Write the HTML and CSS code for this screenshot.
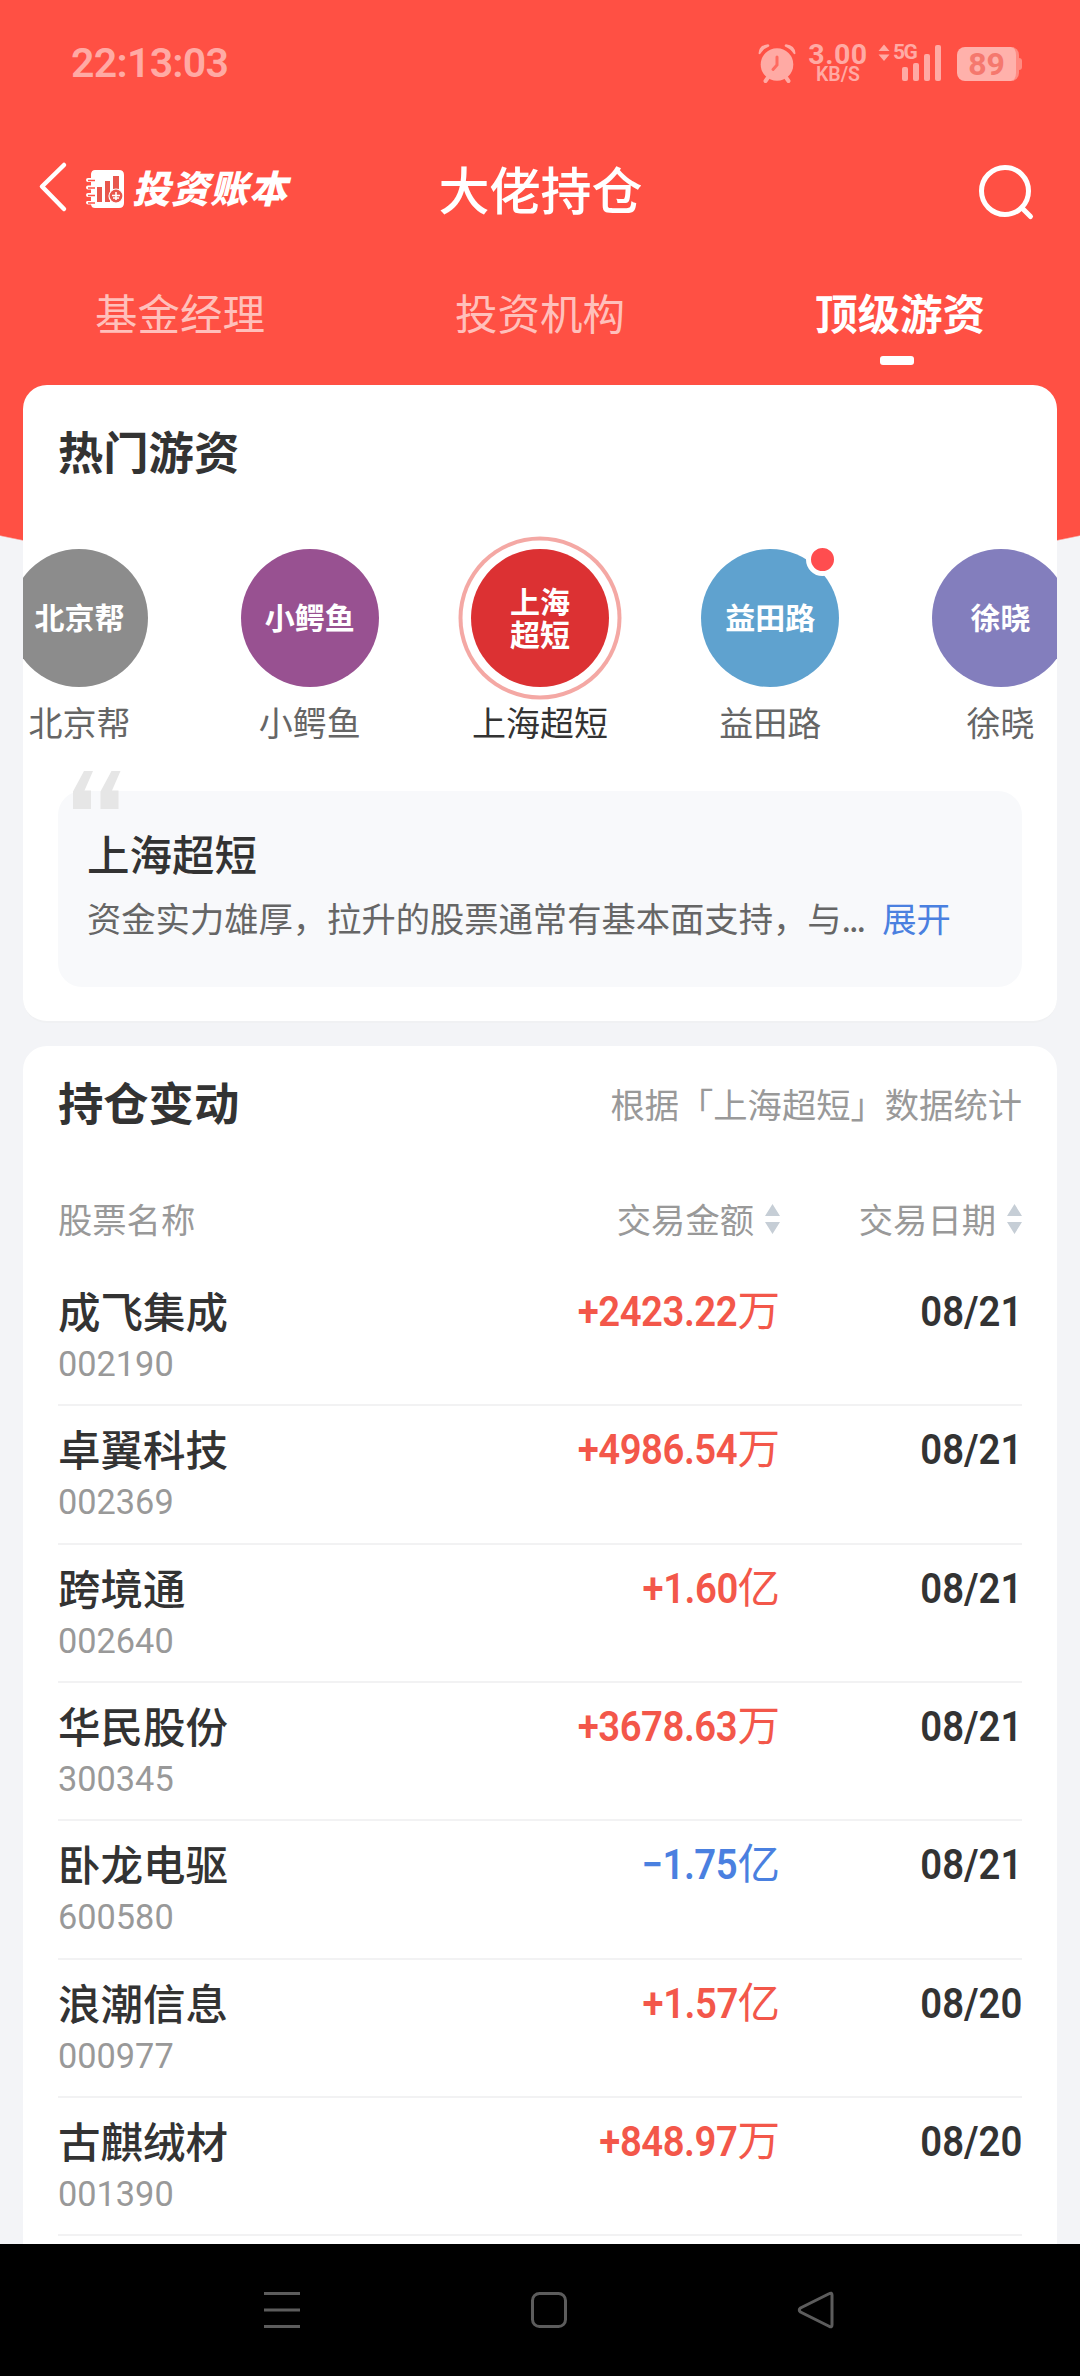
FILE: index.html
```html
<!DOCTYPE html>
<html lang="zh-CN">

<head>
    <meta charset="utf-8">
    <title>大佬持仓</title>
    <link rel="stylesheet" href="styles.css">
</head>

<body>
    <div class="screen">
        <!-- 状态栏 -->
        <div class="status">
            <span class="time">22:13:03</span>
            <svg class="alarm" width="38" height="40" viewBox="0 0 38 40">
                <circle cx="19" cy="21.500" r="16.300" />
                <path d="M0.500 10.500Q1 2 10 1.200Q12 2 11 3.500Q5 6 2.500 10.500Q1.500 12 0.500 10.500ZM37.500 10.500Q37 2 28 1.200Q26 2 27 3.500Q33 6 35.500 10.500Q36.500 12 37.500 10.500Z" />
                <path class="leg" d="M10 34.500L7.500 38M28 34.500L30.500 38" />
                <path class="hand" d="M19 14V22L15 26.500" />
            </svg>
            <div class="speed">
                <b>3.00</b>
                <span>KB/S</span>
            </div>
            <div class="signal">
                <svg class="updown" width="12" height="18" viewBox="0 0 12 18">
                    <path d="M6 0.500L11.500 7H0.500ZM6 17L0.500 10.500H11.500Z" />
                </svg>
                <span class="net">5G</span>
                <div class="bars">
                    <i class="b1"></i><i class="b2"></i><i class="b3"></i><i class="b4"></i>
                </div>
            </div>
            <div class="battery"><span>89</span></div>
            <i class="nub"></i>
        </div>

        <!-- 标题栏 -->
        <div class="navbar">
            <div class="left">
                <svg width="30" height="52" viewBox="0 0 30 52">
                    <path class="line" d="M26 4L4 25.500L26 48" />
                </svg>
                <svg class="book" width="38" height="38" viewBox="0 0 38 38">
                    <path fill="#fff" d="M9 0H33Q38 0 38 5V33Q38 38 33 38H9Q5.500 38 5 34.500H2Q0 34.500 0 32.500T2 31H5V27H2Q0 27 0 25T2 23H5V19.500H2Q0 19.500 0 17.500T2 15.500H5V12H2Q0 12 0 10T2 8H5V4Q5.500 0 9 0Z" />
                    <path fill="#e8564c" d="M11 17H16V32H11ZM19 11H24V32H19ZM27 6H33V21H27Z" />
                    <path stroke="#ff5044" stroke-width="1.400" d="M2 10.500H9M2 18H9M2 25.500H9M2 33H9" />
                    <circle cx="30" cy="26" r="7" fill="#e8564c" stroke="#fff" stroke-width="1.200" />
                    <path fill="none" stroke="#fff" stroke-width="1.600" d="M30 22V30M26 25.500H34M27 28H33" />
                </svg>
                <span class="brand">投资账本</span>
            </div>
            <h1>大佬持仓</h1>
            <div class="right">
                <svg width="58" height="58" viewBox="0 0 58 58">
                    <circle class="glass" cx="28" cy="28" r="23.500" />
                    <path class="glass" d="M45.500 45.500L53.500 53.500" />
                </svg>
            </div>
        </div>

        <div class="tabs">
            <div class="tab">基金经理</div>
            <div class="tab">投资机构</div>
            <div class="tab current">顶级游资</div>
        </div>

        <!-- 热门游资 -->
        <div class="card hot">
            <h2>热门游资</h2>
            <ul class="people">
                <li>
                    <div class="avatar gray">北京帮</div>
                    <p>北京帮</p>
                </li>
                <li>
                    <div class="avatar purple">小鳄鱼</div>
                    <p>小鳄鱼</p>
                </li>
                <li class="active">
                    <div class="avatar red">上海<br>超短</div>
                    <p>上海超短</p>
                </li>
                <li>
                    <div class="avatar blue">益田路<i class="dot"></i></div>
                    <p>益田路</p>
                </li>
                <li>
                    <div class="avatar violet">徐晓</div>
                    <p>徐晓</p>
                </li>
            </ul>
            <div class="intro">
                <svg class="quote" width="48" height="38" viewBox="0 0 48 38">
                    <path d="M11 0H20L11.500 19.500H18V38H0V20.500ZM38.500 0H47.500L39 19.500H45.500V38H27.500V20.500Z" />
                </svg>
                <h3>上海超短</h3>
                <p>资金实力雄厚，拉升的股票通常有基本面支持，与<span>...</span><a>展开</a></p>
            </div>
        </div>

        <!-- 持仓变动 -->
        <div class="card change">
            <div class="head">
                <h2>持仓变动</h2>
                <span>根据「上海超短」数据统计</span>
            </div>
            <div class="row th">
                <div class="name">股票名称</div>
                <div class="amount">交易金额
                    <svg width="15" height="30" viewBox="0 0 15 30"><path d="M7.500 0L15 12H0ZM0 18H15L7.500 30Z" /></svg>
                </div>
                <div class="date">交易日期
                    <svg width="15" height="30" viewBox="0 0 15 30"><path d="M7.500 0L15 12H0ZM0 18H15L7.500 30Z" /></svg>
                </div>
            </div>
            <div class="row">
                <div class="name">成飞集成<small>002190</small></div>
                <div class="amount"><b>+2423.22</b><em>万</em></div>
                <div class="date"><b>08/21</b></div>
            </div>
            <div class="row">
                <div class="name">卓翼科技<small>002369</small></div>
                <div class="amount"><b>+4986.54</b><em>万</em></div>
                <div class="date"><b>08/21</b></div>
            </div>
            <div class="row">
                <div class="name">跨境通<small>002640</small></div>
                <div class="amount"><b>+1.60</b><em>亿</em></div>
                <div class="date"><b>08/21</b></div>
            </div>
            <div class="row">
                <div class="name">华民股份<small>300345</small></div>
                <div class="amount"><b>+3678.63</b><em>万</em></div>
                <div class="date"><b>08/21</b></div>
            </div>
            <div class="row">
                <div class="name">卧龙电驱<small>600580</small></div>
                <div class="amount down"><b>−1.75</b><em>亿</em></div>
                <div class="date"><b>08/21</b></div>
            </div>
            <div class="row">
                <div class="name">浪潮信息<small>000977</small></div>
                <div class="amount"><b>+1.57</b><em>亿</em></div>
                <div class="date"><b>08/20</b></div>
            </div>
            <div class="row">
                <div class="name">古麒绒材<small>001390</small></div>
                <div class="amount"><b>+848.97</b><em>万</em></div>
                <div class="date"><b>08/20</b></div>
            </div>
        </div>

        <!-- 系统按键 -->
        <div class="keys">
            <svg width="38" height="38" viewBox="0 0 38 38"><path d="M1 2.500H37M1 19H37M1 35.500H37" /></svg>
            <svg width="38" height="38" viewBox="0 0 38 38"><rect x="2.500" y="2.500" width="33" height="33" rx="7" /></svg>
            <svg width="38" height="38" viewBox="0 0 38 38"><path d="M32 2.800Q35 1 35 4V34Q35 37 32 35.200L3.500 21Q1 19 3.500 17Z" /></svg>
        </div>
    </div>
</body>

</html>
```
FILE: styles.css
```css
/* reset */

body,
div,
ul,
li,
h1,
h2,
h3,
p {
    margin: 0;
    padding: 0;
}

ul {
    list-style-type: none;
}

i,
em {
    font-style: normal;
}

svg {
    display: block;
    flex: none;
}

body {
    background: #f3f4f7;
    font-family: "Noto Sans CJK SC", sans-serif;
    color: #333;
}
/* 整屏 顶部红色弧形背景 */

.screen {
    display: flex;
    flex-direction: column;
    width: 1080px;
    height: 2376px;
    overflow: hidden;
    background: radial-gradient(circle at 540px -2035px, #ff5044 2626px, #f3f4f7 2627.500px);
}
/* 状态栏 */

.status {
    display: flex;
    box-sizing: border-box;
    height: 126px;
    padding: 42px 58px 0 71px;
    color: #ffaaa4;
    font-family: Roboto, sans-serif;
}

.time {
    flex: 1;
    font-size: 41px;
    line-height: 42px;
    font-weight: 600;
    letter-spacing: -0.700px;
}

.alarm {
    margin: 1px 13px 0 0;
    fill: #ffaaa4;
}

.alarm .leg {
    stroke: #ffaaa4;
    stroke-width: 4;
    stroke-linecap: round;
}

.alarm .hand {
    fill: none;
    stroke: #ff6a60;
    stroke-width: 3;
    stroke-linecap: round;
}

.speed {
    display: flex;
    flex-direction: column;
    align-items: center;
    width: 58px;
}

.speed b {
    font-size: 28.500px;
    line-height: 26px;
    font-weight: 700;
    letter-spacing: 0.500px;
}

.speed span {
    font-size: 19.500px;
    line-height: 13px;
    font-weight: 600;
}

.signal {
    display: flex;
    margin-left: 11px;
    width: 63px;
}

.updown {
    margin-top: 2px;
    fill: #ffaaa4;
}

.net {
    width: 11px;
    margin-left: 3px;
    font-size: 21px;
    line-height: 21px;
    font-weight: 700;
    letter-spacing: -1.500px;
    white-space: nowrap;
}

.bars {
    display: flex;
    align-items: flex-end;
    gap: 5px;
    height: 39px;
    margin-left: -2px;
}

.bars i {
    width: 6px;
    border-radius: 2px;
    background: #ffaaa4;
}

.bars .b1 {
    height: 14px;
}

.bars .b2 {
    height: 18px;
}

.bars .b3 {
    height: 27px;
}

.bars .b4 {
    height: 36px;
}

.battery {
    box-sizing: border-box;
    width: 62px;
    height: 34px;
    margin: 5px 0 0 16px;
    border-radius: 8px;
    border-right: 3px solid #ff8a81;
    background: #ffb1ab;
    text-align: center;
    color: #f5786e;
    font-size: 32px;
    line-height: 35px;
    font-weight: 700;
}

.nub {
    width: 3px;
    height: 12px;
    margin-top: 16px;
    border-radius: 0 3px 3px 0;
    background: #ff8a81;
}
/* 标题栏 */

.navbar {
    display: grid;
    grid-template-columns: 1fr auto 1fr;
    align-items: center;
    height: 128px;
    padding: 0 45px 0 38px;
    color: #fff;
}

.navbar .left {
    display: flex;
    align-items: center;
    margin-top: -6px;
}

.navbar .line,
.navbar .glass {
    fill: none;
    stroke: #fff;
    stroke-width: 4.500;
    stroke-linecap: round;
    stroke-linejoin: round;
}

.navbar .glass {
    stroke-width: 5;
}

.book {
    margin: 4px 8px 0 18px;
}

.brand {
    font-size: 38px;
    line-height: 38px;
    font-weight: 800;
    font-style: italic;
    letter-spacing: 1px;
    white-space: nowrap;
}

.navbar h1 {
    margin: -4px -4px 0 4px;
    font-size: 51px;
    line-height: 60px;
    font-weight: 500;
}

.navbar .right {
    display: flex;
    justify-content: flex-end;
    margin-top: 4px;
}
/* 标签 */

.tabs {
    display: flex;
    height: 131px;
}

.tab {
    display: flex;
    flex-direction: column;
    align-items: center;
    width: 360px;
    padding-top: 28px;
    font-size: 42.500px;
    line-height: 60px;
    color: #ffc0bb;
}

.tab.current {
    color: #fff;
    font-weight: 700;
}

.tab.current::after {
    content: "";
    width: 34px;
    height: 9px;
    margin: 14px 6px 0 0;
    border-radius: 3px;
    background: #fff;
}
/* 卡片 */

.card {
    flex: none;
    box-sizing: border-box;
    margin: 0 23px;
    padding: 0 35px;
    border-radius: 24px;
    background: #fff;
}

h2 {
    font-size: 45.300px;
    line-height: 60px;
    font-weight: 700;
}

.hot {
    height: 638px;
    padding-top: 35px;
    border-bottom: 2px solid #f0f1f3;
}
/* 头像列表 两边超出隐藏 */

.people {
    display: flex;
    justify-content: center;
    height: 284px;
    margin: 0 -35px;
    overflow: hidden;
}

.people li {
    flex: none;
    width: 230.300px;
    padding-top: 69px;
    text-align: center;
}

.people p {
    margin-top: 5px;
    font-size: 34px;
    line-height: 60px;
    color: #666;
}

.people .active p {
    color: #333;
}

.avatar {
    position: relative;
    display: flex;
    align-items: center;
    justify-content: center;
    box-sizing: border-box;
    width: 138px;
    height: 138px;
    margin: 0 auto;
    padding-bottom: 3px;
    border-radius: 50%;
    color: #fff;
    font-size: 30px;
    line-height: 33px;
    font-weight: 700;
}

.gray {
    background: #8c8c8c;
}

.purple {
    background: #985191;
}

.red {
    background: #dc3133;
}

.blue {
    background: #5fa2cf;
}

.violet {
    background: #837ebd;
}

.active .avatar {
    font-weight: 600;
    box-shadow: 0 0 0 8.500px #fff, 0 0 0 12.500px #f4a8a4;
}
/* 红点 */

.dot {
    position: absolute;
    top: -6px;
    right: 0;
    width: 23px;
    height: 23px;
    border: 5px solid #fff;
    border-radius: 50%;
    background: #ff4d4f;
}
/* 简介 */

.intro {
    position: relative;
    box-sizing: border-box;
    height: 196px;
    margin-top: 27px;
    padding: 31px 0 0 29px;
    border-radius: 24px;
    background: #f8f9fb;
}

.quote {
    position: absolute;
    left: 15px;
    top: -20px;
    fill: #e6e6e6;
}

.intro h3 {
    font-size: 42.500px;
    line-height: 62px;
    font-weight: 500;
}

.intro p {
    font-size: 34.300px;
    line-height: 66px;
    color: #666;
    white-space: nowrap;
}

.intro p span {
    letter-spacing: -2px;
}

.intro a {
    margin-left: 18px;
    color: #4a80e0;
}
/* 持仓列表 */

.change {
    flex: 1;
    min-height: 0;
    margin-top: 23px;
    border-radius: 24px 24px 0 0;
    overflow: hidden;
}

.head {
    display: flex;
    align-items: center;
    justify-content: space-between;
    height: 114px;
}

.head h2 {
    margin-top: -4px;
}

.head span {
    font-size: 34.300px;
    color: #999;
}

.row {
    display: grid;
    grid-template-columns: 1fr 360px 242px;
    box-sizing: border-box;
    height: 138.330px;
    padding-top: 12px;
    border-bottom: 2px solid #f2f2f3;
    font-size: 42.500px;
    line-height: 60px;
}

.row .name {
    font-weight: 500;
}

.row small {
    display: block;
    margin-top: 2px;
    font: 400 34.300px/44px Roboto, sans-serif;
    color: #999;
}

.row .amount,
.row .date {
    padding-top: 2px;
    text-align: right;
    font-family: Roboto, "Noto Sans CJK SC", sans-serif;
}

.row .amount {
    color: #f3574a;
}
/* 数字压窄 */

.row b {
    display: inline-block;
    font-weight: 600;
    letter-spacing: -0.500px;
    transform: scaleX(0.9);
    transform-origin: right;
}

.row .date b {
    letter-spacing: 0;
}

.row .amount em {
    font-weight: 400;
}

.row .down {
    color: #4a80e0;
}
/* 表头 */

.row.th {
    height: 108px;
    padding-top: 28px;
    border: 0;
    font-size: 34.300px;
    color: #999;
}

.th .name,
.th .amount,
.th .date {
    display: flex;
    align-items: center;
    justify-content: flex-end;
    height: 60px;
    padding: 0;
    font-family: "Noto Sans CJK SC", sans-serif;
    font-weight: 400;
    color: #999;
}

.th .name {
    justify-content: flex-start;
}

.th svg {
    margin: 2px 0 0 11px;
    fill: #c6ced6;
}
/* 底部按键 */

.keys {
    flex: none;
    display: flex;
    box-sizing: border-box;
    gap: 229px;
    height: 132px;
    padding: 47px 0 0 263px;
    background: #000;
}

.keys svg {
    fill: none;
    stroke: #5c5c5c;
    stroke-width: 3;
}
```
